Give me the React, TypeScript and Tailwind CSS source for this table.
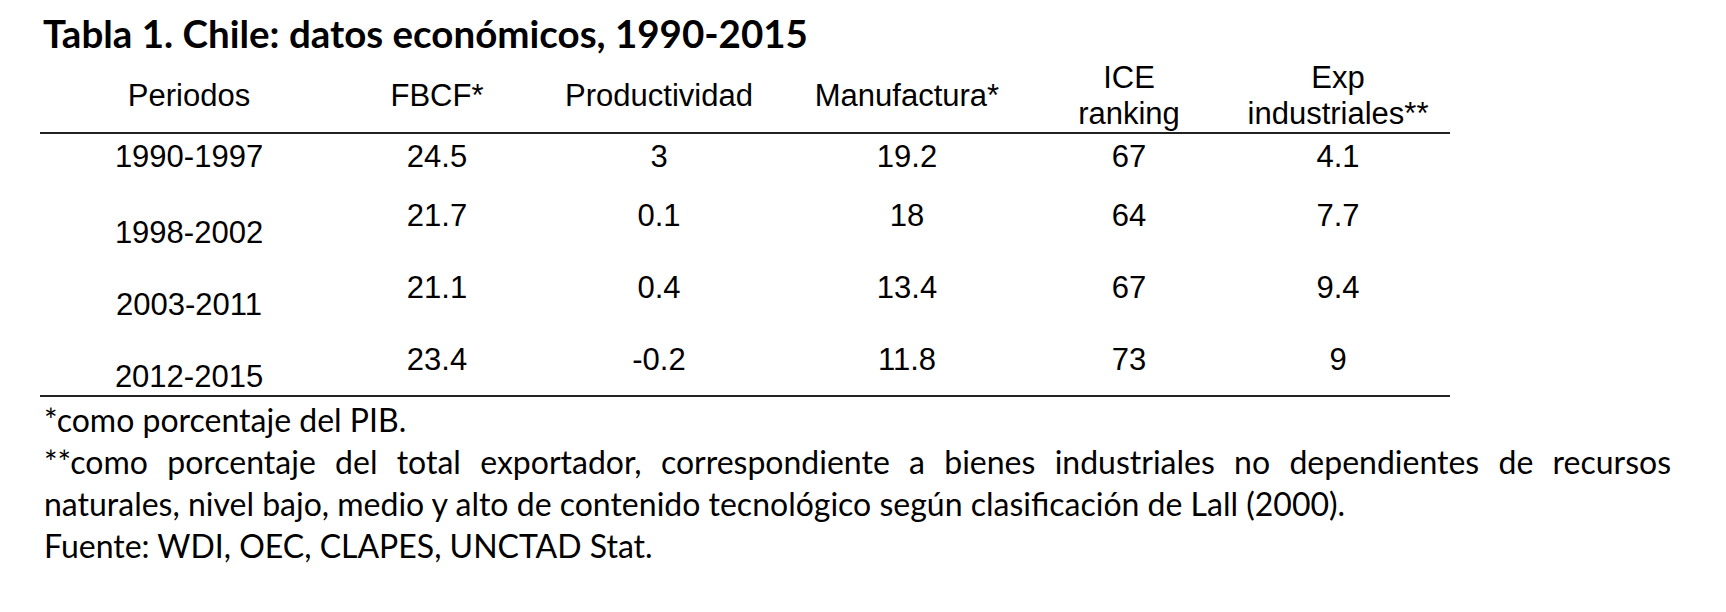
const rows = [
  { p: "1990-1997", v: ["24.5", "3", "19.2", "67", "4.1"] },
  { p: "1998-2002", v: ["21.7", "0.1", "18", "64", "7.7"] },
  { p: "2003-2011", v: ["21.1", "0.4", "13.4", "67", "9.4"] },
  { p: "2012-2015", v: ["23.4", "-0.2", "11.8", "73", "9"] },
];

const cols = "grid grid-cols-[298px_198px_246px_250px_194px_224px]";

export default function App() {
  return (
    <div className="w-[1726px] h-[612px] bg-white text-black pl-[40px] pt-[10px]">
      <h1 className="pl-[3px] h-[50px] [font-family:Lato,sans-serif] font-bold text-[38.5px] leading-[46px]">
        Tabla 1. Chile: datos económicos, 1990-2015
      </h1>
      <div className="w-[1410px] [font-family:'Liberation_Sans',Arial,sans-serif] text-[31px] leading-[36px]">
        <div className={`${cols} h-[74px] items-center text-center border-b-2 border-[#222]`}>
          <div>Periodos</div>
          <div>FBCF*</div>
          <div>Productividad</div>
          <div>Manufactura*</div>
          <div>
            ICE
            <br />
            ranking
          </div>
          <div>
            Exp
            <br />
            industriales**
          </div>
        </div>
        {rows.map((r, i) => {
          const first = i === 0;
          const last = i === rows.length - 1;
          return (
            <div
              key={r.p}
              className={`${cols} text-center ${first ? "h-[45px]" : last ? "h-[74px] border-b-2 border-[#222]" : "h-[72px]"}`}
            >
              <div className={first ? "pt-[5px]" : "self-end"}>{r.p}</div>
              {r.v.map((v, j) => (
                <div key={j} className={first ? "pt-[5px]" : "pt-[19px]"}>
                  {v}
                </div>
              ))}
            </div>
          );
        })}
      </div>
      <div className="mt-[2px] pl-[4px] w-[1631px] [font-family:Lato,sans-serif] text-[32px] leading-[42px]">
        <p>*como porcentaje del PIB.</p>
        <p className="text-justify [text-align-last:justify]">
          **como porcentaje del total exportador, correspondiente a bienes industriales no dependientes de recursos
        </p>
        <p>naturales, nivel bajo, medio y alto de contenido tecnológico según clasificación de Lall (2000).</p>
        <p>Fuente: WDI, OEC, CLAPES, UNCTAD Stat.</p>
      </div>
    </div>
  );
}
